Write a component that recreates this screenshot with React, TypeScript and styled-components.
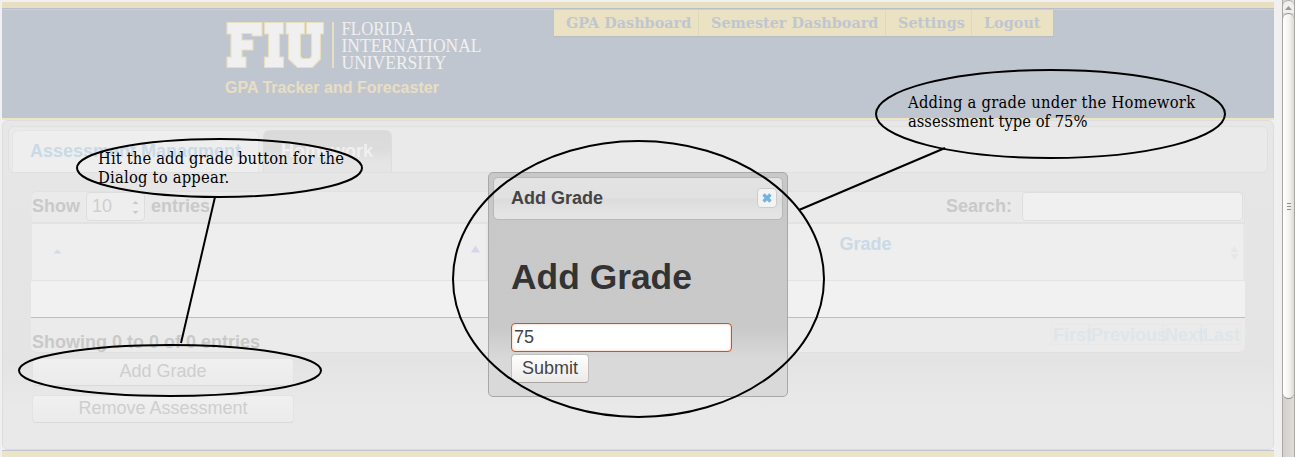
import React from "react";
import styled, { createGlobalStyle } from "styled-components";

const GlobalStyle = createGlobalStyle`
  *, *::before, *::after { box-sizing: border-box; }
  html, body, #root { height: 100%; }
  body {
    margin: 0;
    overflow: hidden;
    background: #f0f0f0;
    font-family: "Liberation Sans", Arial, sans-serif;
    font-size: 18px;
    line-height: 20px;
    color: #c9c9c9;
  }
`;

const Screen = styled.div`
  position: relative;
  display: flex;
  width: 1295px;
  height: 457px;
  overflow: hidden;
`;

const Page = styled.div`
  display: flex;
  flex-direction: column;
  width: 1282px;
  height: 457px;
  padding: 2px 8px 0 2px;
`;

const GoldStripe = styled.div`
  height: 6px;
  flex: none;
  background: #e8dec0;
`;

const Header = styled.header`
  display: flex;
  align-items: flex-start;
  flex: none;
  height: 112px;
  padding: 1px 0 0 223px;
  border-top: 1px solid #b9becb;
  border-bottom: 2px solid #eee4c6;
  background: linear-gradient(#cbd0d8 0 1px, #c0c6cf 1px);
`;

const Brand = styled.div`
  width: 329px;
  padding-top: 10px;
`;

const Tagline = styled.div`
  margin-top: 8px;
  font-size: 16px;
  font-weight: bold;
  line-height: 20px;
  letter-spacing: 0.02px;
  color: #e8dec3;
  white-space: nowrap;
`;

const Nav = styled.nav`
  display: flex;
  height: 26px;
  background: #eae2c3;
  box-shadow: 0 1px 1px #b8bdc4;
`;

const NavItem = styled.a<{ $width: number }>`
  width: ${(p) => p.$width}px;
  padding-left: 12px;
  border-right: 1px solid #e0d8bd;
  font-family: "DejaVu Serif", serif;
  font-size: 14.4px;
  font-weight: bold;
  line-height: 26px;
  color: #c0c6d0;
  white-space: nowrap;
  &:last-child { border-right: 0; }
`;

const Panel = styled.main`
  flex: none;
  height: 330px;
  padding: 5px;
  border: 1px solid #dddddd;
  border-radius: 6px;
  background: linear-gradient(#e7e7e7 0, #e5e5e5 120px, #e4e4e4 240px, #e9e9e9 290px);
`;

const TabBar = styled.div`
  display: flex;
  align-items: flex-end;
  gap: 4px;
  height: 47px;
  padding: 0 3px;
  border: 1px solid #e0e0e0;
  border-radius: 6px;
  background: #eaeaea;
`;

const Tab = styled.div<{ $active?: boolean; $width: number }>`
  width: ${(p) => p.$width}px;
  height: 42px;
  padding: 10px 0 0 17px;
  border: 1px solid ${(p) => (p.$active ? "#dddddd" : "#e5e5e5")};
  border-bottom: 0;
  border-radius: 6px 6px 0 0;
  background: ${(p) => (p.$active ? "linear-gradient(#dadada 0, #dcdcdc 18px, #e5e5e5 32px)" : "#eeeeee")};
  color: ${(p) => (p.$active ? "#f0f0f0" : "#c9dae6")};
  font-weight: bold;
  white-space: nowrap;
`;

const TableWrap = styled.section`
  width: 1214px;
  margin: 18px 0 0 23px;
`;

const Toolbar = styled.div`
  display: flex;
  align-items: center;
  height: 33px;
  padding: 0 1px 2px 0;
  border: solid #e2e2e2;
  border-width: 1px 1px 2px 1px;
  border-left-color: #e7e7e7;
  border-radius: 6px 6px 0 0;
  background: #eaeaea;
  font-weight: bold;
`;

const Select = styled.div`
  display: flex;
  align-items: center;
  justify-content: space-between;
  width: 59px;
  height: 29px;
  margin: 1px 6px 0 6px;
  padding: 0 5px 2px 5px;
  border: 1px solid #dddddd;
  border-radius: 4px;
  background: #eeeeee;
  font-weight: normal;
  color: #cecece;
`;

const SelectArrows = styled.svg`
  position: relative;
  top: 1px;
`;

const SearchLabel = styled.label`
  display: flex;
  align-items: center;
  gap: 10px;
  margin-left: auto;
`;

const SearchBox = styled.div`
  width: 221px;
  height: 29px;
  margin-top: 1px;
  border: 1px solid #dedede;
  border-radius: 4px;
  background: #f0f0f0;
`;

const HeadRow = styled.div`
  display: grid;
  grid-template-columns: 456px 1fr;
  height: 56px;
  margin-left: 1px;
  background: #eeeeee;
`;

const HeadCell = styled.div`
  position: relative;
  border-right: 2px solid #e7e7e7;
  color: #c9dae6;
  font-weight: bold;
  text-align: center;
  padding: 10px 0 0;
`;

const SortMark = styled.svg<{ $left: number; $top: number }>`
  position: absolute;
  left: ${(p) => p.$left}px;
  top: ${(p) => p.$top}px;
`;

const BodyRow = styled.div`
  height: 38px;
  border-top: 1px solid #e3e3e3;
  border-bottom: 1px solid #bdbdbd;
  background: #f1f1f1;
`;

const TableFooter = styled.div`
  display: flex;
  justify-content: space-between;
  height: 35px;
  padding: 14px 4px 0 1px;
  border-bottom: 1px solid #e1e1e1;
  border-radius: 0 0 6px 6px;
  background: #ebebeb;
  font-weight: bold;
`;

const Pager = styled.div`
  display: flex;
  height: 21px;
  margin-top: -8px;
`;

const PageLink = styled.span<{ $width: number }>`
  width: ${(p) => p.$width}px;
  padding-left: 1px;
  border: 1px solid rgba(0, 0, 0, 0.012);
  line-height: 21px;
  color: #dfe5e9;
  white-space: nowrap;
`;

const Actions = styled.div`
  display: flex;
  flex-direction: column;
  gap: 9px;
  width: 262px;
  margin: 5px 0 0 24px;
`;

const ActionButton = styled.button`
  height: 28px;
  padding: 0 0 2px;
  border: 1px solid #e3e3e3;
  border-bottom-color: #d9d9d9;
  border-radius: 4px;
  background: linear-gradient(#f0f0f0, #ebebeb);
  color: #cecece;
  font: 18px/24px "Liberation Sans", Arial, sans-serif;
`;

const PageFooter = styled.footer`
  flex: 1;
  border-top: 1px solid #c0c6cf;
  background: #ebe4c6;
`;

const Scrollbar = styled.aside`
  display: flex;
  flex-direction: column;
  width: 13px;
  height: 457px;
  border-left: 1px solid #aaa7a3;
  border-right: 1px solid #aaa7a3;
  background: linear-gradient(90deg, #d3d0cd, #dfddda);
`;

const ScrollUp = styled.div`
  display: flex;
  justify-content: center;
  padding-top: 5px;
  height: 13px;
  border-top: 1px solid #a5a5a5;
  border-radius: 6px 6px 0 0;
  background: #f0efed;
`;

const ScrollThumb = styled.div`
  display: flex;
  align-items: center;
  justify-content: center;
  height: 386px;
  border-top: 1px solid #8d8d8d;
  border-bottom: 1px solid #8d8d8d;
  border-radius: 6px;
  background: linear-gradient(90deg, #ffffff, #f4f3f1 55%, #dedbd7);
`;

const Dialog = styled.div`
  position: absolute;
  left: 488px;
  top: 172px;
  width: 300px;
  height: 225px;
  padding: 4px;
  border: 1px solid #a8a8a8;
  border-radius: 5px;
  background: linear-gradient(#c8c8c8 0, #c9c9c9 145px, #c9c9c9 155px, #d9d9d9 186px);
  color: #333333;
`;

const DialogTitle = styled.div`
  display: flex;
  align-items: center;
  justify-content: space-between;
  height: 43px;
  padding: 0 5px 2px 17px;
  border: 1px solid #b8b8b8;
  border-radius: 5px;
  background: linear-gradient(#e3e3e3 0, #e1e1e1 20px, #dcdcdc 21px, #e4e4e4 36px);
  color: #444444;
  font-weight: bold;
`;

const CloseButton = styled.button`
  display: flex;
  align-items: center;
  justify-content: center;
  width: 20px;
  height: 20px;
  padding: 0;
  border: 1px solid #cccccc;
  border-radius: 4px;
  background: #f3f3f3;
`;

const DialogBody = styled.div`
  padding-left: 18px;
`;

const DialogHeading = styled.h1`
  height: 40px;
  margin: 37px 0 26px;
  font-size: 35.4px;
  line-height: 40px;
  letter-spacing: 0;
`;

const GradeInput = styled.input`
  display: block;
  width: 221px;
  height: 29px;
  padding: 0 2px;
  border: 1px solid #d15025;
  border-radius: 4px;
  outline: 0;
  box-shadow: inset 0 0 2px #f5a27e;
  background: #ffffff;
  color: #444444;
  font: 18px "Liberation Sans", Arial, sans-serif;
`;

const SubmitButton = styled.button`
  display: block;
  width: 78px;
  height: 29px;
  margin-top: 2px;
  padding: 0;
  border: 1px solid #c0bebb;
  border-bottom-color: #a9a5a0;
  border-radius: 4px;
  background: linear-gradient(#ffffff, #eceae8);
  color: #444444;
  font: 18px "Liberation Sans", Arial, sans-serif;
`;

const Callouts = styled.svg`
  position: absolute;
  inset: 0;
`;

const Note = styled.div<{ $left: number; $top: number }>`
  position: absolute;
  left: ${(p) => p.$left}px;
  top: ${(p) => p.$top}px;
  color: #000000;
  font-family: "DejaVu Serif Condensed", "DejaVu Serif", serif;
  font-stretch: condensed;
  font-size: 16.4px;
  line-height: 19px;
  white-space: nowrap;
`;

const NoteLine = styled.div<{ $spacing: number }>`
  letter-spacing: ${(p) => p.$spacing}px;
`;

const LogoMark = styled.svg`
  display: block;
  overflow: visible;
`;

function Logo() {
  return (
    <LogoMark width="262" height="50" viewBox="0 0 262 50">
      <g fill="#f0f0f0" stroke="#e8dec0" strokeWidth="1.2">
        <path d="M2 2.500H37V16H27V13.500H17V20H28V30H17V37H21V47.500H2V37H6V14H2Z" />
        <path d="M39.500 2.500H58.500V14H54.500V37H58.500V47.500H39.500V37H43.500V14H39.500Z" />
        <path d="M61 2.500H79.500V14H75.500V36.500L77.500 38.500H84.500L86.500 36.500V14H81.500V2.500H98.500V14H95.500V39L87.500 47.500H72.500L63.500 39V14H61Z" />
      </g>
      <path d="M108 2V48" stroke="#e8dec0" strokeWidth="2" />
      <g fill="#f0f0f0" fontFamily="Liberation Serif, serif" fontSize="18">
        <text x="116.500" y="14.500" textLength="73" lengthAdjust="spacingAndGlyphs">FLORIDA</text>
        <text x="116.500" y="31.500" textLength="140" lengthAdjust="spacingAndGlyphs">INTERNATIONAL</text>
        <text x="116.500" y="48.500" textLength="105" lengthAdjust="spacingAndGlyphs">UNIVERSITY</text>
      </g>
    </LogoMark>
  );
}

export default function App() {
  return (
    <>
      <GlobalStyle />
      <Screen>
        <Page>
          <GoldStripe />
          <Header>
            <Brand>
              <Logo />
              <Tagline>GPA Tracker and Forecaster</Tagline>
            </Brand>
            <Nav>
              <NavItem $width={145}>GPA Dashboard</NavItem>
              <NavItem $width={187}>Semester Dashboard</NavItem>
              <NavItem $width={86}>Settings</NavItem>
              <NavItem $width={81}>Logout</NavItem>
            </Nav>
          </Header>
          <Panel>
            <TabBar>
              <Tab $width={247}>Assessment Managment</Tab>
              <Tab $width={129} $active>Homework</Tab>
            </TabBar>
            <TableWrap>
              <Toolbar>
                Show
                <Select>
                  10
                  <SelectArrows width="7" height="14" viewBox="0 0 7 14" fill="#c9c9c9">
                    <path d="M0.500 4L3.500 1L6.500 4ZM0.500 11L3.500 14L6.500 11Z" />
                  </SelectArrows>
                </Select>
                entries
                <SearchLabel>
                  Search:
                  <SearchBox />
                </SearchLabel>
              </Toolbar>
              <HeadRow>
                <HeadCell>
                  <SortMark $left={21} $top={25} width="9" height="5">
                    <path d="M0.500 4.500L4.500 0.500L8.500 4.500Z" fill="#cddde8" />
                  </SortMark>
                  <SortMark $left={439} $top={21} width="9" height="8">
                    <path d="M0 7.500L4.500 0.500L9 7.500Z" fill="#d6d6ea" />
                  </SortMark>
                </HeadCell>
                <HeadCell>
                  Grade
                  <SortMark $left={742} $top={21} width="9" height="16">
                    <path d="M0.500 7L4.500 1L8.500 7ZM0.500 9L4.500 15L8.500 9Z" fill="#e7e7e7" />
                  </SortMark>
                </HeadCell>
              </HeadRow>
              <BodyRow />
              <TableFooter>
                <span>Showing 0 to 0 of 0 entries</span>
                <Pager>
                  <PageLink $width={38}>First</PageLink>
                  <PageLink $width={74}>Previous</PageLink>
                  <PageLink $width={38}>Next</PageLink>
                  <PageLink $width={40}>Last</PageLink>
                </Pager>
              </TableFooter>
            </TableWrap>
            <Actions>
              <ActionButton>Add Grade</ActionButton>
              <ActionButton>Remove Assessment</ActionButton>
            </Actions>
          </Panel>
          <PageFooter />
        </Page>
        <Scrollbar>
          <ScrollUp>
            <svg width="7" height="4" viewBox="0 0 7 4"><path d="M0 4L3.500 0L7 4Z" fill="#999999" /></svg>
          </ScrollUp>
          <ScrollThumb>
            <svg width="4" height="7" viewBox="0 0 4 7"><path d="M0 .5H4M0 3.500H4M0 6.500H4" stroke="#8f8f8f" /></svg>
          </ScrollThumb>
        </Scrollbar>

        <Dialog role="dialog">
          <DialogTitle>
            Add Grade
            <CloseButton aria-label="Close">
              <svg width="10" height="10" viewBox="0 0 10 10">
                <path d="M1.500 1.500L8.500 8.500M8.500 1.500L1.500 8.500" stroke="#72b3e2" strokeWidth="3.200" />
              </svg>
            </CloseButton>
          </DialogTitle>
          <DialogBody>
            <DialogHeading>Add Grade</DialogHeading>
            <GradeInput defaultValue="75" />
            <SubmitButton>Submit</SubmitButton>
          </DialogBody>
        </Dialog>

        <Callouts width="1295" height="457" fill="none" stroke="#000000" strokeWidth="2">
          <ellipse cx="219.500" cy="168" rx="142.500" ry="29" />
          <path d="M215 197L181 343" />
          <ellipse cx="170" cy="370.500" rx="151" ry="25.500" />
          <ellipse cx="638.500" cy="279" rx="185.500" ry="138" />
          <path d="M799 210L945 148" />
          <ellipse cx="1050.500" cy="114" rx="174.500" ry="44" />
        </Callouts>
        <Note $left={98} $top={149}>
          <NoteLine $spacing={0.14}>Hit the add grade button for the</NoteLine>
          <NoteLine $spacing={0.22}>Dialog to appear.</NoteLine>
        </Note>
        <Note $left={908} $top={93}>
          <NoteLine $spacing={0.25}>Adding a grade under the Homework</NoteLine>
          <NoteLine $spacing={0}>assessment type of 75%</NoteLine>
        </Note>
      </Screen>
    </>
  );
}
